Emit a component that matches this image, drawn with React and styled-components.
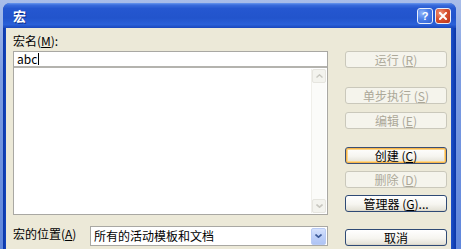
import React from 'react';
import styled, { createGlobalStyle, css } from 'styled-components';

const Global = createGlobalStyle`
  html, body { margin: 0; padding: 0; width: 461px; height: 249px; overflow: hidden; }
  body { background: #7D9DE2; font-family: "Noto Sans CJK SC", "Noto Sans", sans-serif; }
  #root { width: 461px; height: 249px; }
`;

const Desktop = styled.div`
  width: 461px;
  height: 249px;
  overflow: hidden;
  box-sizing: border-box;
  padding: 3px 5px 0 3px;
  background: linear-gradient(180deg, #A9BDE9 0%, #7D9DE2 30%, #5F86DC 100%);
`;

const Window = styled.div`
  width: 453px;
  height: 262px;
  display: flex;
  flex-direction: column;
  border-radius: 7px 7px 0 0;
  background: linear-gradient(90deg, #0B36A8 0%, #1B4EC6 1%, #2559D2 50%, #1B4EC6 99%, #0B36A8 100%);
  overflow: hidden;
`;

const TitleBar = styled.div`
  height: 25px;
  flex: none;
  display: flex;
  align-items: center;
  justify-content: space-between;
  padding: 0 5px 0 10px;
  background: linear-gradient(180deg, #6A98EE 0%, #3A6CDC 8%, #2557D0 22%, #2254CC 60%, #2A60D8 86%, #1A47BC 100%);
`;

const Title = styled.span`
  color: #fff;
  font-size: 13px;
  font-weight: bold;
  line-height: 16px;
  text-shadow: 1px 1px 0 #0A2A8A;
  padding-top: 1px;
`;

const Controls = styled.div`
  display: flex;
  gap: 2px;
  padding-top: 1px;
`;

const CtrlBtn = styled.div`
  width: 14px;
  height: 14px;
  border: 1px solid #E8EEFA;
  border-radius: 3px;
  display: flex;
  align-items: center;
  justify-content: center;
  color: #fff;
  font-family: "Liberation Sans", sans-serif;
  font-weight: bold;
  font-size: 11px;
  line-height: 14px;
  ${p => p.$kind === 'close'
    ? css`background: radial-gradient(circle at 30% 30%, #F0957A 0%, #D9532F 45%, #B8311A 100%);`
    : css`background: radial-gradient(circle at 30% 30%, #8FB4FA 0%, #4C7FE8 45%, #2E5FD2 100%);`}
`;

const Client = styled.div`
  flex: 1;
  margin: 0 5px 0 3px;
  background: #ECE9D8;
  display: flex;
  padding-left: 7px;
`;

const LeftCol = styled.div`
  width: 315px;
  display: flex;
  flex-direction: column;
`;

const Label = styled.div`
  font-size: 12px;
  line-height: 14px;
  color: #000;
  white-space: nowrap;
  u { text-decoration: underline; text-underline-offset: 1px; }
`;

const NameLabel = styled(Label)`
  height: 23px;
  box-sizing: border-box;
  padding-top: 6px;
`;

const Combo = styled.div`
  height: 164px;
  box-sizing: border-box;
  border: 1px solid #A9A8A3;
  display: flex;
  flex-direction: column;
  background: #fff;
`;

const NameField = styled.div`
  height: 16px;
  flex: none;
  box-sizing: border-box;
  border-bottom: 2px solid #B4B3AE;
  padding: 0 3px;
  font-size: 12px;
  line-height: 14px;
  display: flex;
  align-items: center;
  color: #000;
`;

const Caret = styled.span`
  display: inline-block;
  width: 1px;
  height: 12px;
  background: #000;
  margin-left: 1px;
`;

const ListArea = styled.div`
  flex: 1;
  display: flex;
  justify-content: flex-end;
  padding: 1px 1px 1px 0;
`;

const ScrollBar = styled.div`
  width: 14px;
  display: flex;
  flex-direction: column;
  background: #FBFBF9;
  border-left: 1px solid #F0EFEA;
`;

const ArrowBtn = styled.div`
  height: 14px;
  flex: none;
  box-sizing: border-box;
  border: 1px solid #E6E5DF;
  border-radius: 2px;
  background: #F3F3EE;
  display: flex;
  align-items: center;
  justify-content: center;
`;

const Track = styled.div`
  flex: 1;
`;

const LocationRow = styled.div`
  margin-top: 11px;
  height: 20px;
  display: flex;
  align-items: center;
`;

const LocLabel = styled(Label)`
  width: 77px;
  margin-top: -5px;
`;

const Select = styled.div`
  flex: 1;
  height: 20px;
  box-sizing: border-box;
  border: 1px solid #A9A8A3;
  background: #fff;
  display: flex;
  align-items: center;
  padding: 1px 1px 1px 3px;
`;

const SelectText = styled.div`
  flex: 1;
  font-size: 12px;
  line-height: 14px;
  color: #000;
  margin-top: -1px;
`;

const DropBtn = styled.div`
  width: 15px;
  height: 17px;
  box-sizing: border-box;
  border: 1px solid #B9CBF4;
  border-radius: 2px;
  background: linear-gradient(180deg, #D6E2FC 0%, #BED0F8 50%, #AFC4F4 100%);
  display: flex;
  align-items: center;
  justify-content: center;
`;

const RightCol = styled.div`
  margin-left: 17px;
  width: 102px;
  display: flex;
  flex-direction: column;
  padding-top: 23px;
`;

const Button = styled.div`
  height: 17px;
  box-sizing: border-box;
  margin-top: ${p => p.$gap || 0}px;
  border-radius: 3px;
  display: flex;
  align-items: center;
  justify-content: center;
  font-size: 12px;
  line-height: 14px;
  white-space: nowrap;
  u { text-decoration: underline; text-underline-offset: 1px; }
  ${p => p.$disabled
    ? css`
        border: 1px solid #CAC8BB;
        background: #F5F4EC;
        color: #ACA899;
      `
    : css`
        border: 1px solid #2F4A75;
        background: linear-gradient(180deg, #FFFFFF 0%, #F6F5F0 55%, #E6E4DA 90%, #D6D2C4 100%);
        color: #000;
      `}
  ${p => p.$default && css`
    border-color: #3B4F73;
    box-shadow: inset 0 0 0 1px #F7B54A, inset 0 0 0 2px #FDD88D;
  `}
`;

const ChevronUp = () => (
  <svg width="7" height="4" viewBox="0 0 7 4">
    <path d="M0.5 3.5 L3.5 0.8 L6.5 3.5" fill="none" stroke="#C8C7C0" strokeWidth="1.4" />
  </svg>
);

const ChevronDown = ({ color = '#C8C7C0' }) => (
  <svg width="7" height="4" viewBox="0 0 7 4">
    <path d="M0.5 0.5 L3.5 3.2 L6.5 0.5" fill="none" stroke={color} strokeWidth="1.6" />
  </svg>
);

const CloseX = () => (
  <svg width="8" height="8" viewBox="0 0 8 8">
    <path d="M1 1 L7 7 M7 1 L1 7" stroke="#fff" strokeWidth="2" strokeLinecap="square" />
  </svg>
);

const buttons = [
  { t: '运行 ', k: 'R', gap: 0, dis: true },
  { t: '单步执行 ', k: 'S', gap: 19, dis: true },
  { t: '编辑 ', k: 'E', gap: 8, dis: true },
  { t: '创建 ', k: 'C', gap: 18, def: true },
  { t: '删除 ', k: 'D', gap: 7, dis: true },
  { t: '管理器 ', k: 'G', gap: 7, tail: '...' },
];

export default function App() {
  return (
    <>
      <Global />
      <Desktop>
        <Window>
          <TitleBar>
            <Title>宏</Title>
            <Controls>
              <CtrlBtn $kind="help">?</CtrlBtn>
              <CtrlBtn $kind="close"><CloseX /></CtrlBtn>
            </Controls>
          </TitleBar>
          <Client>
            <LeftCol>
              <NameLabel>宏名(<u>M</u>):</NameLabel>
              <Combo>
                <NameField>abc<Caret /></NameField>
                <ListArea>
                  <ScrollBar>
                    <ArrowBtn><ChevronUp /></ArrowBtn>
                    <Track />
                    <ArrowBtn><ChevronDown /></ArrowBtn>
                  </ScrollBar>
                </ListArea>
              </Combo>
              <LocationRow>
                <LocLabel>宏的位置(<u>A</u>)</LocLabel>
                <Select>
                  <SelectText>所有的活动模板和文档</SelectText>
                  <DropBtn><ChevronDown color="#3C5A98" /></DropBtn>
                </Select>
              </LocationRow>
            </LeftCol>
            <RightCol>
              {buttons.map(b => (
                <Button key={b.k} $gap={b.gap} $disabled={b.dis} $default={b.def}>
                  {b.t}(<u>{b.k}</u>){b.tail || ''}
                </Button>
              ))}
              <Button $gap={17}>取消</Button>
            </RightCol>
          </Client>
        </Window>
      </Desktop>
    </>
  );
}
